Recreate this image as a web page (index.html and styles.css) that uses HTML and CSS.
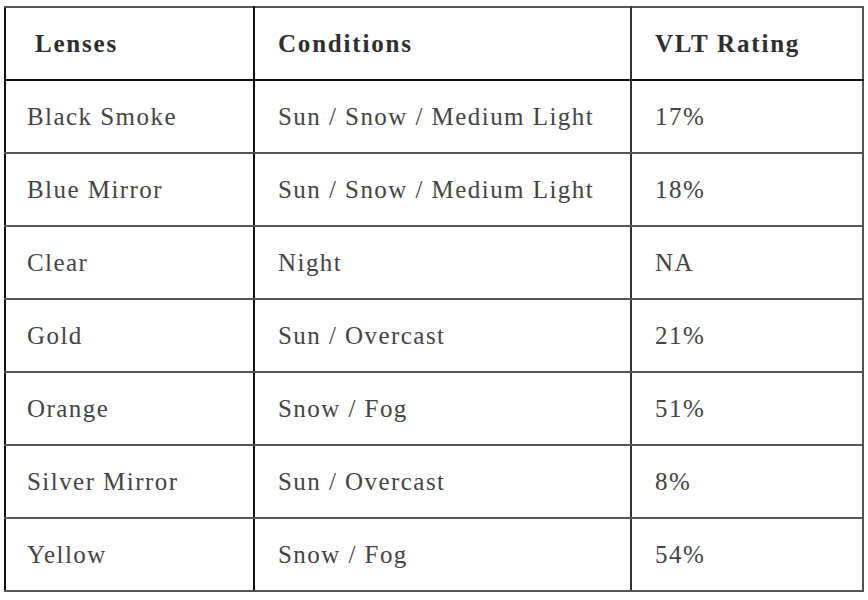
FILE: index.html
```html
<!DOCTYPE html>
<html>
<head>
<meta charset="utf-8">
<link rel="stylesheet" href="styles.css">
</head>
<body>
<table class="lens-table">
  <colgroup>
    <col class="c1"><col class="c2"><col class="c3">
  </colgroup>
  <thead>
    <tr><th class="first">Lenses</th><th>Conditions</th><th>VLT Rating</th></tr>
  </thead>
  <tbody>
    <tr><td>Black Smoke</td><td>Sun / Snow / Medium Light</td><td>17%</td></tr>
    <tr><td>Blue Mirror</td><td>Sun / Snow / Medium Light</td><td>18%</td></tr>
    <tr><td>Clear</td><td>Night</td><td>NA</td></tr>
    <tr><td>Gold</td><td>Sun / Overcast</td><td>21%</td></tr>
    <tr><td>Orange</td><td>Snow / Fog</td><td>51%</td></tr>
    <tr><td>Silver Mirror</td><td>Sun / Overcast</td><td>8%</td></tr>
    <tr><td>Yellow</td><td>Snow / Fog</td><td>54%</td></tr>
  </tbody>
</table>
</body>
</html>
```
FILE: styles.css
```css
html, body {
  margin: 0;
  padding: 0;
  background: #ffffff;
}
body {
  padding: 6px 0 0 4px;
}
.lens-table {
  border-collapse: collapse;
  table-layout: fixed;
  width: 858px;
  font-family: "Liberation Serif", "Times New Roman", Times, "DejaVu Serif", serif;
  font-size: 25px;
  letter-spacing: 1.45px;
  color: #444;
}
.c1 { width: 249px; }
.c2 { width: 377px; }
.c3 { width: 232px; }
.lens-table th,
.lens-table td {
  height: 73px;
  padding: 0 0 0 23px;
  text-align: left;
  vertical-align: middle;
  border: 2px solid #555;
  box-sizing: border-box;
}
.lens-table td:first-child {
  padding-left: 21px;
}
.lens-table th {
  font-weight: bold;
  color: #2e2e2e;
  letter-spacing: 1.8px;
  border-bottom: 2px solid #111;
}
.lens-table th.first {
  padding-left: 29px;
}
.lens-table tr > :first-child {
  border-left: 2px solid #111;
  border-right: 2px solid #111;
}
.lens-table tr > :nth-child(2) {
  border-right: 2px solid #333;
}
```
